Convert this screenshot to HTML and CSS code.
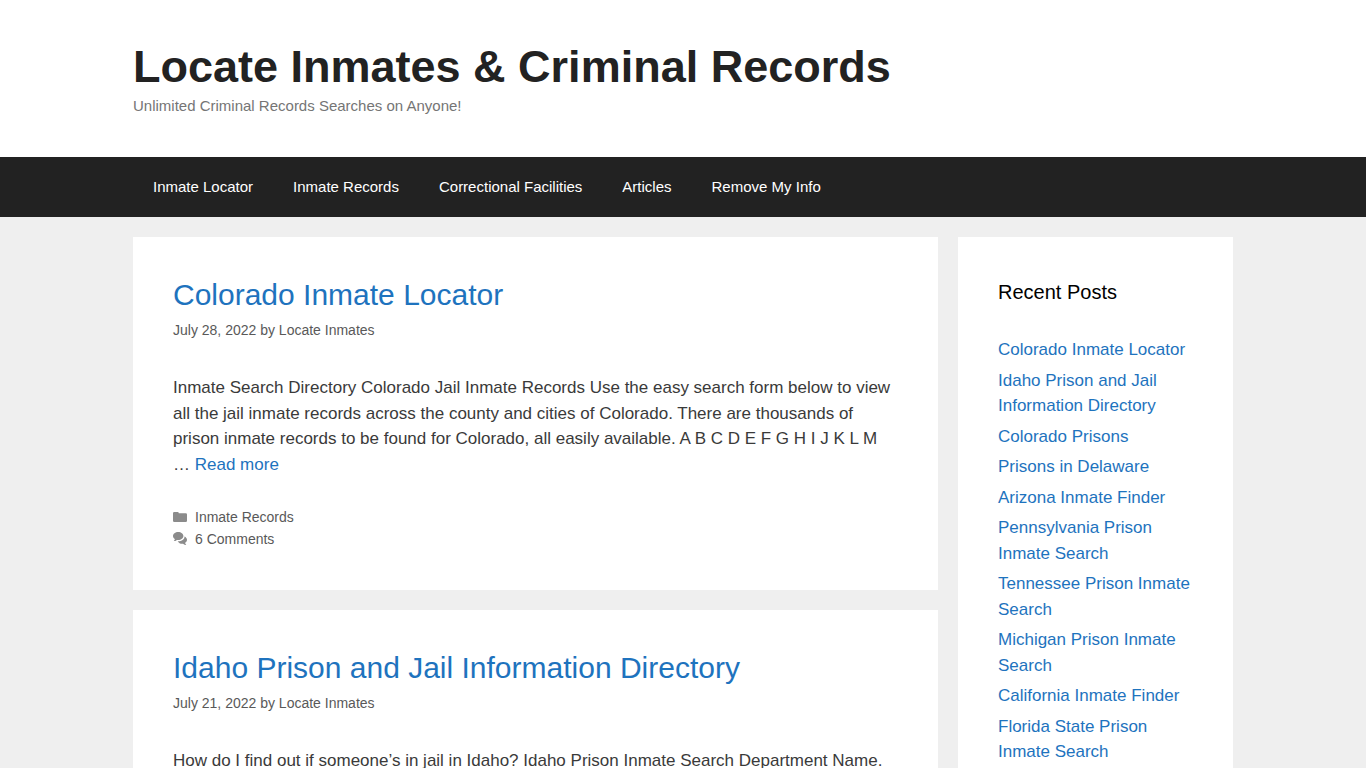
FILE: index.html
```html
<!DOCTYPE html>
<html lang="en-US">
<head>
  <meta charset="UTF-8">
  <meta name="viewport" content="width=device-width, initial-scale=1">
  <title>Locate Inmates &amp; Criminal Records</title>
  <link rel="stylesheet" href="styles.css">
</head>
<body>

<header class="site-header">
  <div class="inside-header">
    <h1 class="main-title"><a href="#">Locate Inmates &amp; Criminal Records</a></h1>
    <p class="site-description">Unlimited Criminal Records Searches on Anyone!</p>
  </div>
</header>

<nav class="main-navigation">
  <ul class="menu">
    <li><a href="#">Inmate Locator</a></li>
    <li><a href="#">Inmate Records</a></li>
    <li><a href="#">Correctional Facilities</a></li>
    <li><a href="#">Articles</a></li>
    <li><a href="#">Remove My Info</a></li>
  </ul>
</nav>

<div class="site-content">
  <main class="content-area">
    <article class="post">
      <h2 class="entry-title"><a href="#">Colorado Inmate Locator</a></h2>
      <div class="entry-meta">July 28, 2022 by <a href="#">Locate Inmates</a></div>
      <div class="entry-summary">
        <p>Inmate Search Directory Colorado Jail Inmate Records Use the easy search form below to view all the jail inmate records across the county and cities of Colorado. There are thousands of prison inmate records to be found for Colorado, all easily available. A B C D E F G H I J K L M … <a href="#">Read more</a></p>
      </div>
      <footer class="entry-footer">
        <div class="footer-item">
          <svg class="icon" viewBox="0 0 14 14" aria-hidden="true"><path d="M1.200 2H4.600Q5.800 2 5.800 3.300H12.800Q14 3.300 14 4.500V10.800Q14 12 12.800 12H1.200Q0 12 0 10.800V3.200Q0 2 1.200 2z"/></svg>
          <a href="#">Inmate Records</a>
        </div>
        <div class="footer-item">
          <svg class="icon" viewBox="0 0 14 14" aria-hidden="true"><path d="M5.200 0C8.100 0 10.400 1.700 10.400 4S8.100 8 5.200 8L4 7.900C2.900 8.700 1.900 9.100.8 9.100 1.400 8.500 1.800 7.800 1.900 7.100.7 6.300 0 5.200 0 4 0 1.700 2.300 0 5.200 0z"/><path d="M11.500 4.400C13 5.100 14 6.300 14 7.700 14 8.900 13.300 10 12.100 10.800 12.200 11.600 12.600 12.300 13.300 13 12.200 13 11 12.500 10 11.700 7.800 12 5.700 11.100 4.700 9.200 8.400 9.400 11.700 7.200 11.500 4.400z"/></svg>
          <a href="#">6 Comments</a>
        </div>
      </footer>
    </article>

    <article class="post">
      <h2 class="entry-title"><a href="#">Idaho Prison and Jail Information Directory</a></h2>
      <div class="entry-meta">July 21, 2022 by <a href="#">Locate Inmates</a></div>
      <div class="entry-summary">
        <p>How do I find out if someone’s in jail in Idaho? Idaho Prison Inmate Search Department Name.</p>
      </div>
    </article>
  </main>

  <aside class="sidebar">
    <h2 class="widget-title">Recent Posts</h2>
    <ul class="widget-list">
      <li><a href="#">Colorado Inmate Locator</a></li>
      <li><a href="#">Idaho Prison and Jail Information Directory</a></li>
      <li><a href="#">Colorado Prisons</a></li>
      <li><a href="#">Prisons in Delaware</a></li>
      <li><a href="#">Arizona Inmate Finder</a></li>
      <li><a href="#">Pennsylvania Prison Inmate Search</a></li>
      <li><a href="#">Tennessee Prison Inmate Search</a></li>
      <li><a href="#">Michigan Prison Inmate Search</a></li>
      <li><a href="#">California Inmate Finder</a></li>
      <li><a href="#">Florida State Prison Inmate Search</a></li>
    </ul>
  </aside>
</div>

</body>
</html>
```
FILE: styles.css
```css
body {
  margin: 0;
  background: #efefef;
  color: #3a3a3a;
  font-family: "Liberation Sans", Arial, Helvetica, sans-serif;
  font-size: 17px;
  line-height: 1.5;
}

h1, h2, p, ul {
  margin: 0;
  padding: 0;
}

h1, h2 {
  font-weight: normal;
}

ul {
  list-style: none;
}

a {
  color: #1e73be;
  text-decoration: none;
}

a:hover {
  color: #000;
}

/* header */

.site-header {
  background: #fff;
}

.inside-header {
  box-sizing: border-box;
  max-width: 1100px;
  margin: 0 auto;
  padding: 40px 0;
}

.main-title {
  font-size: 45px;
  font-weight: bold;
  line-height: 54px;
}

.main-title a {
  color: #222;
}

.site-description {
  color: #757575;
  font-size: 15px;
  line-height: 23px;
}

/* navigation */

.main-navigation {
  background: #222;
}

.menu {
  display: flex;
  flex-wrap: wrap;
  max-width: 1100px;
  margin: 0 auto;
}

.menu a {
  display: block;
  padding: 0 20px;
  color: #fff;
  font-size: 15px;
  line-height: 60px;
}

/* content */

.site-content {
  display: grid;
  grid-template-columns: minmax(0, 1fr) 25%;
  align-items: start;
  max-width: 1100px;
  margin: 0 auto;
  padding: 20px 0;
}

.content-area {
  margin-right: 20px;
}

.post {
  margin-bottom: 20px;
  padding: 40px;
  background: #fff;
}

.entry-title {
  font-size: 30px;
  line-height: 36px;
}

.entry-meta {
  margin-top: 6px;
  color: #595959;
  font-size: 14px;
  line-height: 22px;
}

.entry-meta a,
.entry-footer a {
  color: #595959;
}

.entry-summary {
  margin-top: 34px;
}

.entry-footer {
  margin-top: 29px;
  color: #595959;
  font-size: 14px;
  line-height: 22px;
}

.footer-item {
  display: flex;
  align-items: center;
  gap: 8px;
}

.icon {
  width: 14px;
  height: 14px;
  fill: #8b8b8b;
}

/* sidebar */

.sidebar {
  padding: 40px;
  background: #fff;
}

.widget-title {
  margin-bottom: 30px;
  color: #000;
  font-size: 20px;
  line-height: 30px;
}

.widget-list li {
  margin-bottom: 5px;
}
```
